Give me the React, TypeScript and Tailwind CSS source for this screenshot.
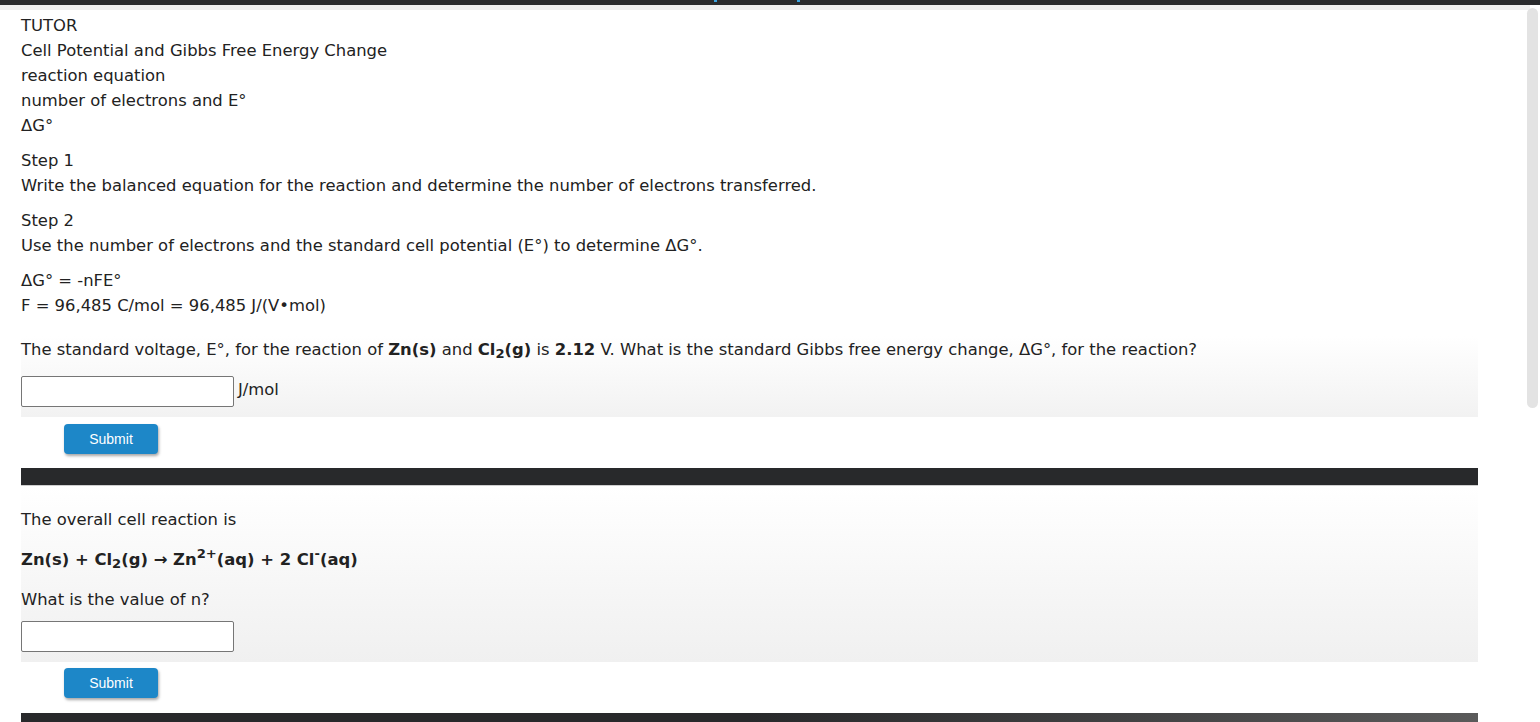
import React from "react";

const font = { fontFamily: '"DejaVu Sans", Verdana, sans-serif' };

function SubmitBtn({ top, bottom }: { top: string; bottom: string }) {
  return (
    <div className={`pl-[43px] ${top} ${bottom}`}>
      <button
        className="block w-[94px] h-[30px] rounded-[4px] bg-[#1d87c8] text-white text-[14px] shadow-[1px_2px_3px_rgba(0,0,0,0.35)]"
        style={{ fontFamily: '"Liberation Sans", Arial, sans-serif' }}
      >
        Submit
      </button>
    </div>
  );
}

export default function App() {
  return (
    <div className="relative w-[1540px] h-[722px] overflow-hidden bg-white text-[#222] text-[16.4px]" style={font}>
      <div className="h-[5px] bg-[#2a2b2d] relative">
        <div className="absolute left-[714px] top-0 w-[3px] h-[2px] bg-[#3ba3e0]" />
        <div className="absolute left-[797px] top-0 w-[3px] h-[2px] bg-[#3ba3e0]" />
      </div>
      <div className="h-[5px] bg-[#efefef] mr-[10px]" />
      <div className="absolute right-[2px] top-[8px] w-[11px] h-[400px] rounded-full bg-[#e3e3e3]" />

      <div className="pl-[21px] pr-[62px]">
        <div className="flex flex-col leading-[25px] pt-[3px]">
          <div>TUTOR</div>
          <div>Cell Potential and Gibbs Free Energy Change</div>
          <div>reaction equation</div>
          <div>number of electrons and E°</div>
          <div>ΔG°</div>
        </div>
        <div className="mt-[10px] leading-[25px]">
          <div>Step 1</div>
          <div>Write the balanced equation for the reaction and determine the number of electrons transferred.</div>
        </div>
        <div className="mt-[10px] leading-[25px]">
          <div>Step 2</div>
          <div>Use the number of electrons and the standard cell potential (E°) to determine ΔG°.</div>
        </div>
        <div className="mt-[10px] leading-[25px]">
          <div>ΔG° = -nFE°</div>
          <div>F = 96,485 C/mol = 96,485 J/(V•mol)</div>
        </div>

        <div className="mt-[18px] bg-gradient-to-b from-white to-[#f2f2f2] pt-[1px] pb-[10px]">
          <div className="leading-[25px]">
            The standard voltage, E°, for the reaction of <b>Zn(s)</b> and <b>Cl<sub className="text-[0.8em]">2</sub>(g)</b> is <b>2.12</b> V. What is the standard Gibbs free energy change, ΔG°, for the reaction?
          </div>
          <div className="mt-[14px] flex items-center">
            <input className="w-[213px] h-[31px] border border-[#767676] rounded-[2px] bg-white" />
            <span className="ml-[4px] -mt-[2px]">J/mol</span>
          </div>
        </div>
        <SubmitBtn top="pt-[7px]" bottom="pb-[14px]" />
        <div className="h-[18px] bg-[#28292b] border-b border-[#cfcfcf]" />

        <div className="bg-gradient-to-b from-white to-[#f0f0f0] pt-[21px] pb-[10px]">
          <div className="leading-[25px]">The overall cell reaction is</div>
          <div className="mt-[15px] leading-[25px] font-bold">
            Zn(s) + Cl<sub className="text-[0.8em]">2</sub>(g) → Zn<sup className="text-[0.8em]">2+</sup>(aq) + 2 Cl<sup className="text-[0.8em]">-</sup>(aq)
          </div>
          <div className="mt-[15px] leading-[25px]">What is the value of n?</div>
          <div className="mt-[9px] flex items-center">
            <input className="w-[213px] h-[31px] border border-[#767676] rounded-[2px] bg-white" />
          </div>
        </div>
        <SubmitBtn top="pt-[6px]" bottom="pb-[15px]" />
        <div className="h-[18px] bg-gradient-to-r from-[#28292b] via-[#28292b] to-[#5a5a5a]" />
      </div>
    </div>
  );
}
